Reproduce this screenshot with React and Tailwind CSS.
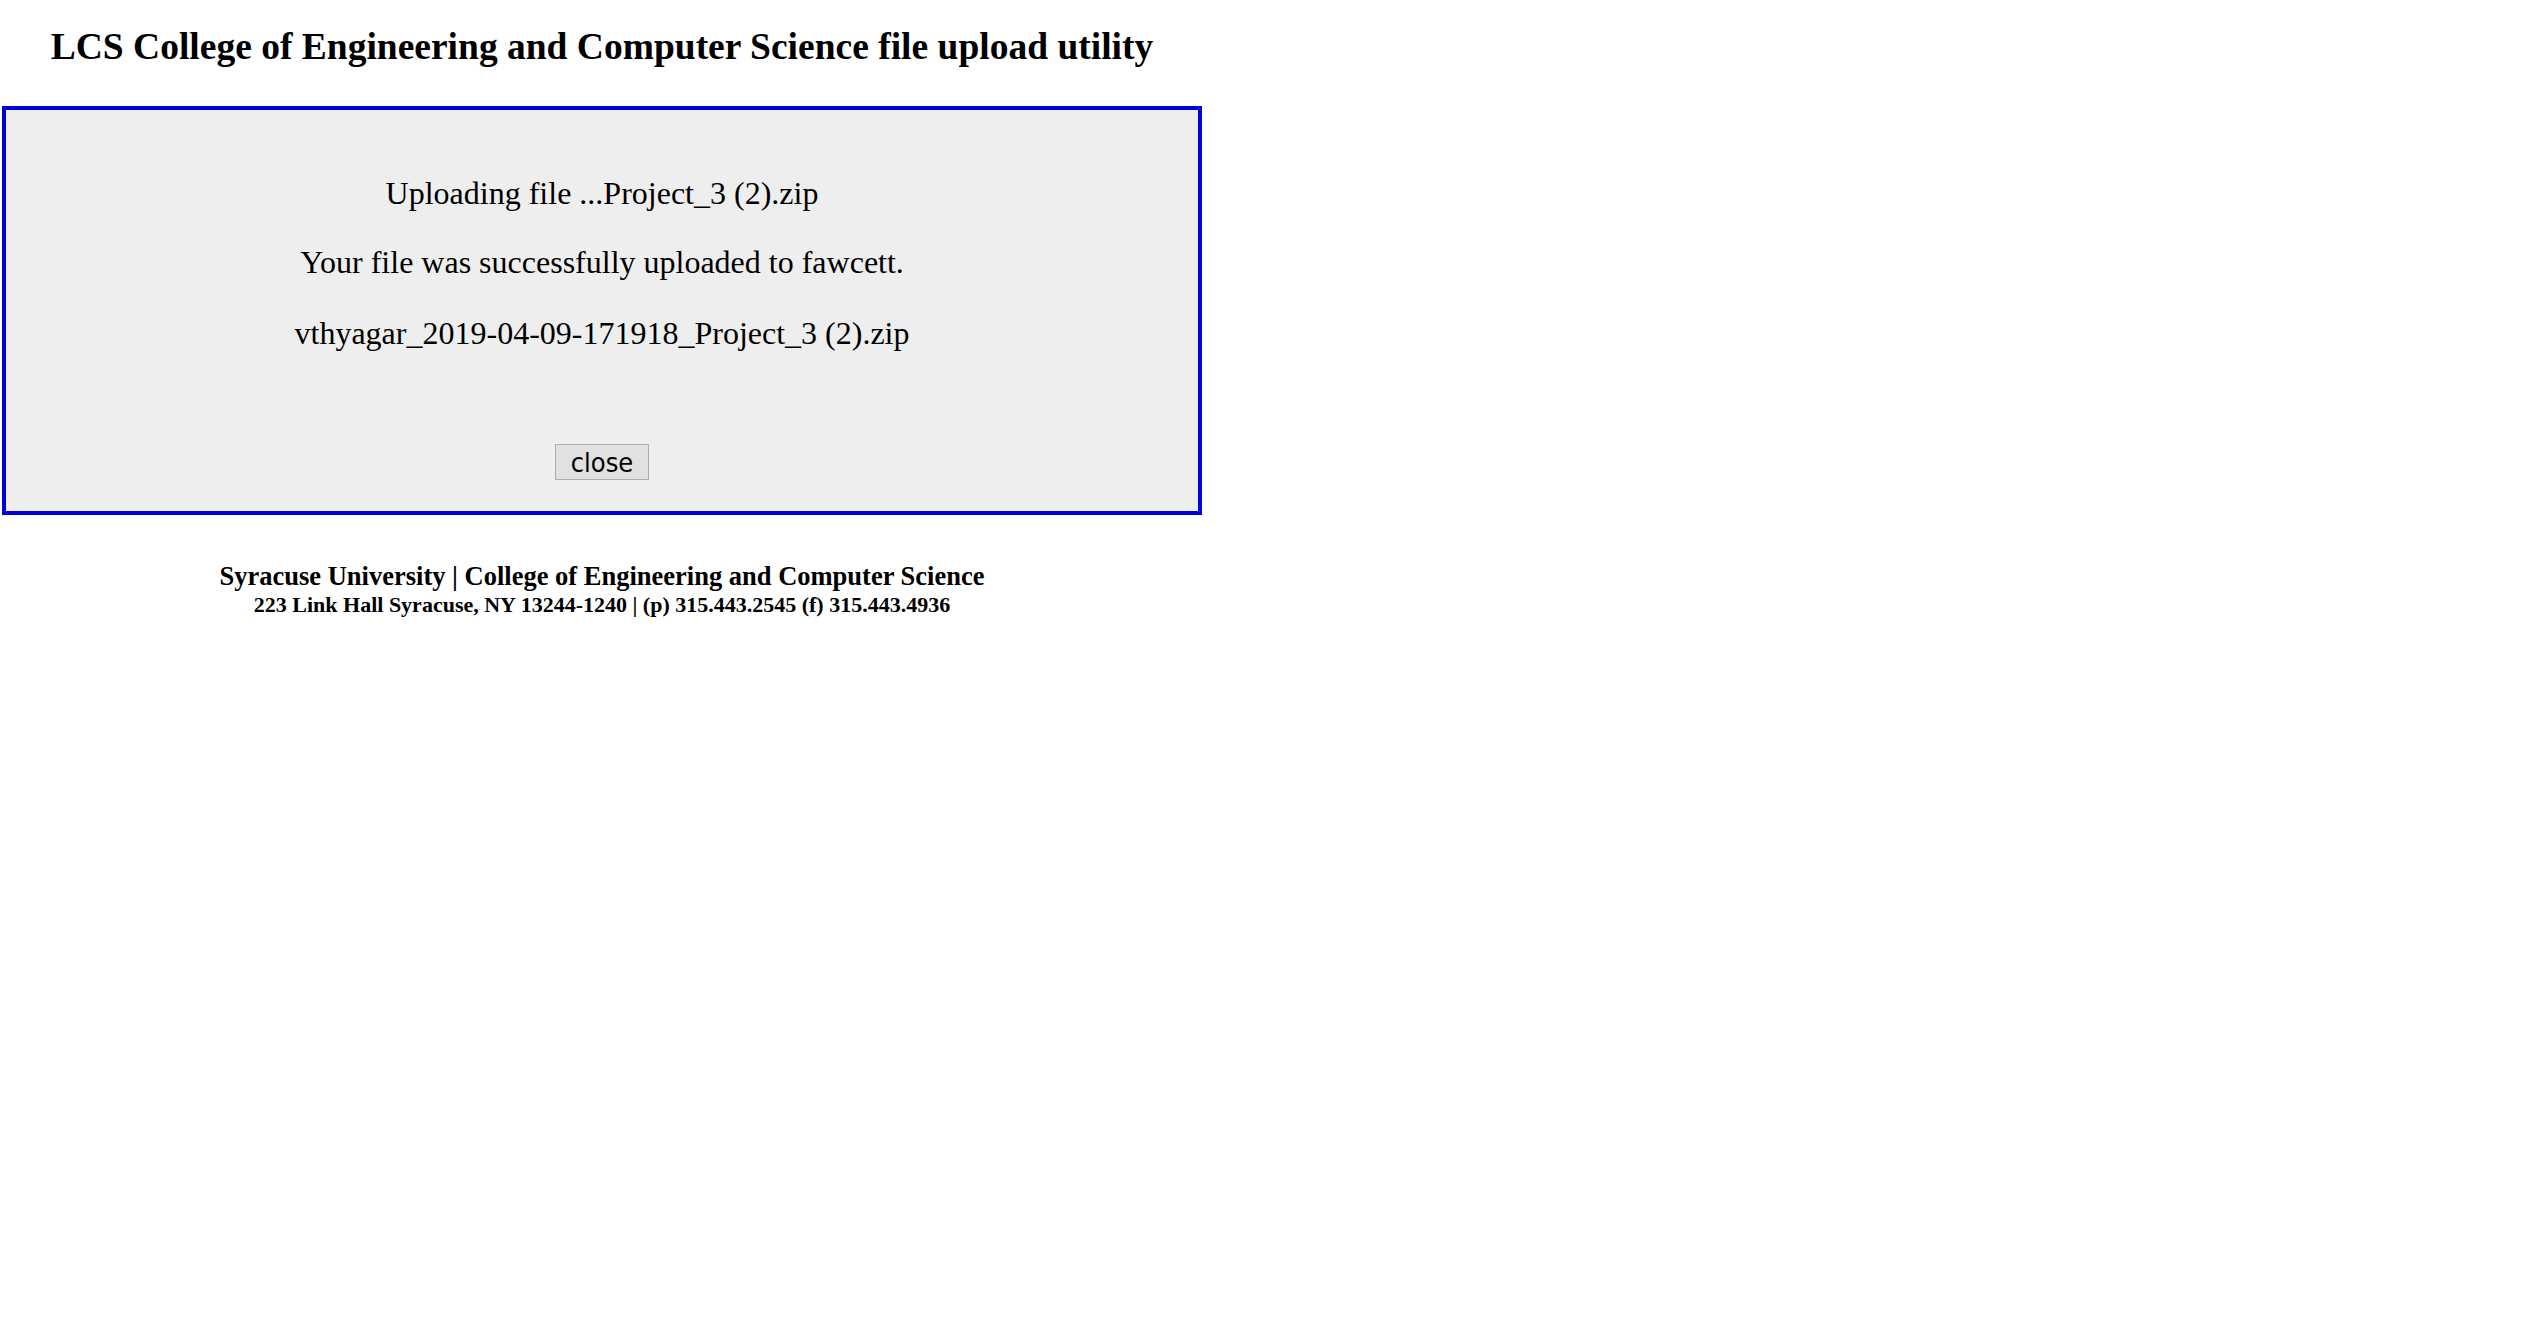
export default function App() {
  return (
    <div className="w-[2530px] h-[1321px] bg-white" style={{ fontFamily: '"Liberation Serif", "Times New Roman", serif' }}>
      <div className="w-[1200px] ml-[2px]">
        <h1 className="pt-[24px] h-[106px] text-center text-[37.5px] leading-[46px] font-bold text-black">
          LCS College of Engineering and Computer Science file upload utility
        </h1>
        <div className="h-[409px] border-[4px] border-[#0000dd] bg-[#eeeeee] flex flex-col items-center pt-[65px]">
          <p className="text-[32px] leading-[37px] text-black">Uploading file ...Project_3 (2).zip</p>
          <p className="mt-[32px] text-[32px] leading-[37px] text-black">Your file was successfully uploaded to fawcett.</p>
          <p className="mt-[34px] text-[32px] leading-[37px] text-black">vthyagar_2019-04-09-171918_Project_3 (2).zip</p>
          <button
            className="mt-[92px] w-[94px] h-[36px] bg-[#e1e1e1] border border-[#adadad] text-[27px] leading-none text-black"
            style={{ fontFamily: '"DejaVu Sans Condensed", "DejaVu Sans", Tahoma, sans-serif' }}
          >
            close
          </button>
        </div>
        <div className="text-center font-bold text-black pt-[46px]">
          <div className="text-[26.5px] leading-[30px]">Syracuse University | College of Engineering and Computer Science</div>
          <div className="text-[22px] leading-[27px]">223 Link Hall Syracuse, NY 13244-1240 | (p) 315.443.2545 (f) 315.443.4936</div>
        </div>
      </div>
    </div>
  );
}
